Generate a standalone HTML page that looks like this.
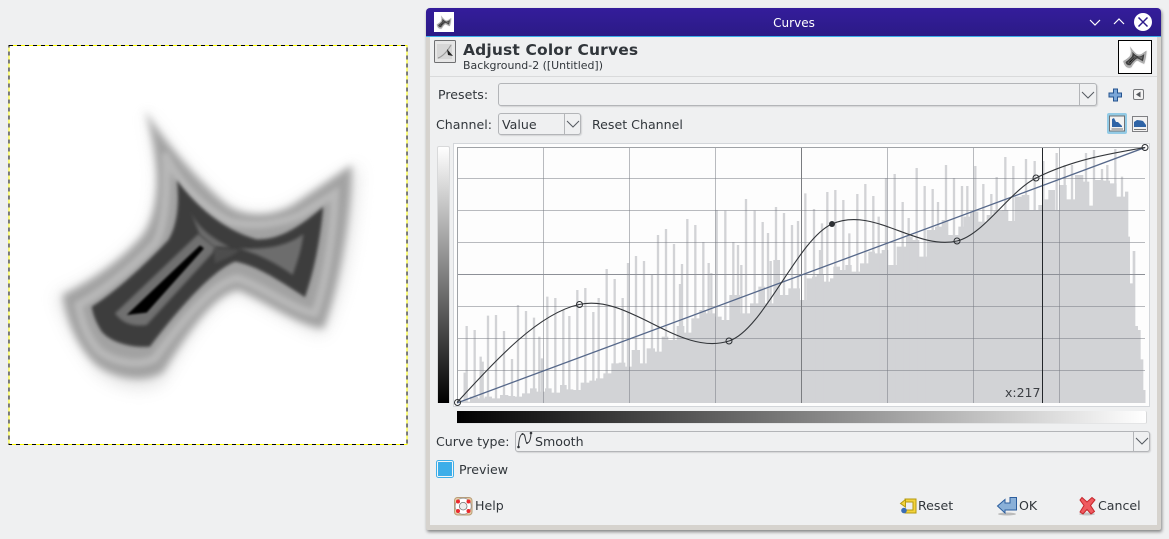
<!DOCTYPE html>
<html><head><meta charset="utf-8"><style>
html,body{margin:0;padding:0;width:1169px;height:539px;overflow:hidden;background:#eff0f1}
body{position:relative;font-family:"DejaVu Sans","Liberation Sans",sans-serif;font-size:13px;color:#31363b}
.a{position:absolute;box-sizing:border-box}
.t{position:absolute;white-space:nowrap;line-height:16px;height:16px}
.c{position:absolute;box-sizing:border-box;border:1px solid #b3b5b8;border-radius:3px;background:#eff0f1;box-shadow:1px 1px 1px #d3d4d6}
.d{position:absolute;top:0;bottom:0;border-left:1px solid #b3b5b8}
svg{position:absolute;left:0;top:0;overflow:visible}
</style></head><body>
<div class="a" style="left:9px;top:45px;width:398px;height:399px;background:#fff"></div>
<svg width="1169" height="539" viewBox="0 0 1169 539">
<defs>
<filter id="b0" x="-30%" y="-30%" width="160%" height="160%"><feGaussianBlur stdDeviation="24"/></filter>
<filter id="b1" x="-20%" y="-20%" width="140%" height="140%"><feGaussianBlur stdDeviation="12"/></filter>
<filter id="b2" x="-20%" y="-20%" width="140%" height="140%"><feGaussianBlur stdDeviation="8"/></filter>
<filter id="b3" x="-20%" y="-20%" width="140%" height="140%"><feGaussianBlur stdDeviation="4.500"/></filter>
<filter id="b5" x="-30%" y="-30%" width="160%" height="160%"><feGaussianBlur stdDeviation="3"/></filter>
<g id="shape">
<path filter="url(#b0)" fill="#c4c4c4" opacity=".45" d="M435 240C480 320 590 450 680 525C730 560 810 565 880 525L1075 405C1075 560 1035 800 970 915C900 900 800 825 715 790C650 800 580 890 490 1055C440 1090 350 1080 290 1025C240 960 190 880 168 795C270 755 360 695 425 620C465 570 475 480 470 420C465 350 450 290 435 240Z"/>
<path filter="url(#b1)" fill="#a2a2a2" d="M435 240C480 320 590 450 680 525C730 560 810 565 880 525L1055 405C1055 560 1015 780 970 895C900 890 800 815 715 780C650 790 580 880 490 1025C440 1060 350 1050 290 1005C240 960 200 880 188 795C270 755 360 695 425 620C465 570 475 480 470 420C465 350 450 290 435 240Z"/>
<path filter="url(#b2)" fill="none" stroke="#b8b8b8" stroke-width="24" stroke-linejoin="miter" d="M495 370C540 470 620 540 690 575C750 590 830 585 900 555L1005 490C1000 620 975 770 945 850C880 840 790 770 712 745C650 755 570 840 465 985C420 1010 350 1000 300 965C265 930 245 880 235 825C300 790 390 720 465 640C495 590 505 470 495 370Z"/>
<path filter="url(#b3)" fill="#3c3c3c" d="M530 450C590 530 670 600 770 628C840 630 900 590 970 530C960 640 940 730 915 802C850 760 770 705 705 695C640 720 540 830 450 950C390 955 330 935 305 905C290 880 280 860 275 830C340 790 430 710 505 630C530 590 540 520 530 450Z"/>
<path filter="url(#b3)" fill="#6f6f6f" d="M345 850L595 612L650 655L440 885C410 890 370 885 345 850Z"/>
<path filter="url(#b3)" fill="#6d6d6d" d="M910 612C905 660 890 700 878 735C830 700 770 670 715 655C790 660 860 650 910 612Z"/>
<path filter="url(#b3)" fill="#6a6a6a" d="M570 540C590 590 630 620 690 652L640 650L600 615Z"/>
<path filter="url(#b3)" fill="#4e4e4e" d="M640 652L720 660L690 680L645 700Z"/>
<path filter="url(#b5)" fill="#000" d="M380 855L600 646L612 655L440 848Z"/>
</g>
</defs>
<g transform="translate(0,30) scale(.33333)"><use href="#shape"/></g>
<rect x="9" y="45.500" width="398" height="399" fill="none" stroke="#ffff00" stroke-width="1"/>
<rect x="9" y="45.500" width="398" height="399" fill="none" stroke="#000" stroke-width="1" stroke-dasharray="4 4"/>
</svg>

<!-- window -->
<div class="a" style="left:426px;top:8px;width:735px;height:522px;background:#d6d3ce;border-radius:4px 4px 2px 2px;box-shadow:1px 2px 3px rgba(0,0,0,.45)"></div>
<div class="a" style="left:426px;top:8px;width:735px;height:29px;border-radius:4px 4px 0 0;background:linear-gradient(#341d9b,#2b1a86);border-bottom:1px solid #3daee9"></div>
<div class="a" style="left:430px;top:37px;width:727px;height:488px;background:#eff0f1"></div>
<div class="a" style="left:430px;top:76px;width:727px;height:1px;background:#d9dadb"></div>
<div class="a" style="left:434px;top:12px;width:20px;height:20px;background:#fff"></div>
<svg width="1169" height="539" viewBox="0 0 1169 539">
<g transform="translate(433.600,11.200) scale(.0167)"><use href="#shape"/></g>
</svg>
<div class="t" style="left:601px;top:15px;width:386px;text-align:center;color:#fff;font-size:12px">Curves</div>
<svg width="1169" height="539" viewBox="0 0 1169 539">
<path d="M1090 20L1095 25L1100 20" fill="none" stroke="#fff" stroke-width="1.200"/>
<path d="M1114 24L1119 19L1124 24" fill="none" stroke="#fff" stroke-width="1.200"/>
<circle cx="1143" cy="22" r="9" fill="#fff"/>
<path d="M1138.500 17.500L1147.500 26.500M1147.500 17.500L1138.500 26.500" stroke="#2d1b8c" stroke-width="1.500"/>
<!-- header icon -->
<rect x="434.500" y="40.500" width="21" height="22" rx="1" fill="#e6e6e6" stroke="#6f7072" stroke-width="1"/>
<path d="M437 44H452V59H437Z" fill="#d6d6d6"/>
<path d="M438 58C444 56 448 50 451 45" fill="none" stroke="#999" stroke-width="1.200"/>
<path d="M447 49L453 56L448 55Z" fill="#222"/>
</svg>
<div class="t" style="left:463px;top:41px;font-weight:bold;font-size:15.500px;line-height:18px;height:18px;letter-spacing:.15px;color:#31363b">Adjust Color Curves</div>
<div class="t" style="left:463px;top:58px;font-size:10.950px">Background-2 ([Untitled])</div>
<div class="a" style="left:1118px;top:40px;width:34px;height:34px;background:#fff;border:1px solid #000"></div>
<svg width="1169" height="539" viewBox="0 0 1169 539">
<g transform="translate(1118.300,39.800) scale(.0267)"><use href="#shape"/></g>
</svg>

<div class="t" style="left:438px;top:87px;font-size:12.600px">Presets:</div>
<div class="c" style="left:498px;top:83px;width:599px;height:23px"><div class="d" style="left:580px"></div></div>
<div class="t" style="left:436px;top:117px;font-size:12.600px">Channel:</div>
<div class="c" style="left:498px;top:113px;width:83px;height:22px"><div class="d" style="left:65px"></div></div>
<div class="t" style="left:502px;top:117px;font-size:12.600px">Value</div>
<div class="t" style="left:592px;top:117px;font-size:12.600px">Reset Channel</div>

<svg width="1169" height="539" viewBox="0 0 1169 539">
<path d="M1082 92L1088 98L1094 92" fill="none" stroke="#555a60" stroke-width="1"/>
<path d="M567 121L573 127L579 121" fill="none" stroke="#555a60" stroke-width="1"/>
<!-- plus -->
<path d="M1113.500 89H1117.500V93H1121.500V97H1117.500V101H1113.500V97H1109V93H1113.500Z" fill="#7aa6d8" stroke="#24538f" stroke-width="1"/>
<!-- small menu -->
<rect x="1133.500" y="89.500" width="10" height="10" rx="1.500" fill="#f4f4f4" stroke="#77797c"/>
<path d="M1140.500 91.500V97.500L1136 94.500Z" fill="#55585c"/>
<!-- histogram toggles -->
<rect x="1107" y="113" width="20" height="21" rx="2" fill="#93cbe6"/>
<rect x="1109.500" y="116" width="15" height="15" fill="#f2f2f2" stroke="#6f7073"/>
<path d="M1112 127V119L1114 118L1116 122L1118 122L1122 126V127Z" fill="#2f64a6"/>
<path d="M1111.500 129H1123" stroke="#777" stroke-width="1"/>
<rect x="1132.500" y="116.500" width="15" height="15" fill="#f2f2f2" stroke="#7f8083"/>
<path d="M1134 127V122L1137 120L1141 120.500L1143 121L1146 125V127Z" fill="#2f64a6"/>
<path d="M1134 129.500H1146" stroke="#777" stroke-width="1"/>
</svg>

<!-- left value bar -->
<div class="a" style="left:437px;top:146px;width:13px;height:257px;border-radius:2px 2px 0 0;background:linear-gradient(#fff,#000);border:1px solid #d8d9da;border-bottom:0"></div>
<!-- graph frame -->
<div class="a" style="left:453px;top:143px;width:697px;height:264px;background:#fdfdfd;border:1px solid #d3d6da"></div>
<svg width="1169" height="539" viewBox="0 0 1169 539">
<defs><clipPath id="cp"><rect x="457" y="148" width="688.500" height="255"/></clipPath></defs>
<g clip-path="url(#cp)">
<g transform="translate(450,140) scale(.33333)" fill="#d2d3d6" stroke="none">
<path d="M22 790V785H60V770H84V775H104V770H126V775H150V765H175V768H195V770H216V760H240V745H260V755H285V745H305V758H330V735H350V748H370V750H392V728H418V722H438V715H460V700H484V670H506V668H526V680H545V630H570V670H590V625H615V635H635V590H655V600H680V558H703V578H724V535H748V510H768V520H795V530H815V540H838V465H870V520H900V490H925V440H945V490H970V360H990V465H1015V445H1050V790Z"/>
<path fill="none" stroke="#d2d3d6" stroke-width="7" d="M44 790V698M50 790V558M74 790V570M92 790V650M98 790V665M114 790V527M138 790V525M162 790V573M186 790V657M204 790V495M228 790V513M252 790V533M268 790V590M276 790V655M292 790V470M316 790V474M340 790V510M358 790V528M382 790V450M406 790V444M430 790V516M446 790V474M470 790V387M494 790V417M518 790V474M534 790V369M558 790V348M582 790V363M606 790V404M624 790V285M648 790V267M672 790V312M690 790V432M696 790V372M712 790V237M736 790V255M760 790V306M776 790V369M784 790V399M800 790V210M826 790V212M850 790V306M864 790V315M874 790V375M888 790V177M914 790V212M938 790V246M954 790V279M962 790V363M978 790V201M1002 790V219M1026 790V255M1044 790V243"/>
</g>
<g transform="translate(800,140) scale(.33333)" fill="#d2d3d6" stroke="none">
<path d="M0 790V480H20V415H36V410H50V405H72V425H90V415H100V380H120V390H136V375H155V395H180V370H205V335H225V340H245V330H265V375H290V320H318V290H338V300H358V350H380V270H405V260H425V240H445V285H475V260H490V230H510V215H535V245H560V225H580V212H605V210H625V243H645V170H665V165H688V210H715V195H728V178H745V150H765V210H778V135H800V178H825V105H850V125H868V197H880V120H910V122H930V130H950V170H975V155H985V290H990V430H998V333H1006V558H1014V570H1022V658H1030V750H1038V790Z"/>
<path fill="none" stroke="#d2d3d6" stroke-width="7" d="M16 790V160M42 790V207M60 790V330M66 790V250M82 790V156M106 790V150M130 790V180M148 790V280M172 790V162M196 790V132M220 790V168M236 790V230M258 790V114M284 790V102M308 790V186M326 790V234M350 790V84M374 790V138M398 790V147M414 790V186M438 790V75M462 790V114M486 790V138M502 790V138M526 790V78M550 790V132M574 790V162M590 790V111M616 790V51M640 790V78M678 790V57M704 790V63M730 790V63M770 790V39M794 790V75M816 790V75M858 790V39M882 790V30M906 790V87M922 790V75M946 790V27M966 790V110"/>
</g>
<g fill="none" stroke="#73777f" stroke-opacity=".5" stroke-width="1">
<path d="M543.500 148V403M629.500 148V403M715.500 148V403M887.500 148V403M973.500 148V403M1059.500 148V403"/>
<path d="M457 178.500H1145M457 210.500H1145M457 242.500H1145M457 306.500H1145M457 338.500H1145M457 370.500H1145"/>
</g>
<path d="M801.500 148V403" stroke="#7a7c80" stroke-width="1"/>
<path d="M457 274.500H1145" stroke="#8d9097" stroke-width="1"/>
</g>
<path d="M457.500 403V147.500H1145.500" fill="none" stroke="#9fa2a6" stroke-width="1"/>
<path d="M457 403L1145 147.500" stroke="#56688a" stroke-width="1.300" fill="none"/>
<path d="M1042.500 148V403" stroke="#23262a" stroke-width="1"/>
<path d="M457 402.500C497.700 358.100 538.300 313.700 579 304.500C629 293.200 679 356.900 729 341C763.300 330.100 797.700 239.100 832 224C873.700 205.700 915.300 250.400 957 241C983.300 235.100 1009.700 191.100 1036 178C1072.300 159.900 1108.700 153.700 1145 147.500" fill="none" stroke="#33363a" stroke-width="1.100"/>
<g fill="none" stroke="#2c2f33" stroke-width="1">
<circle cx="457.500" cy="402.500" r="3"/><circle cx="579.500" cy="304.500" r="3"/><circle cx="729" cy="341" r="3"/><circle cx="957" cy="241" r="3"/><circle cx="1036" cy="178" r="3"/><circle cx="1145" cy="147.500" r="3"/>
</g>
<circle cx="832" cy="224" r="3" fill="#2c2f33"/>
</svg>
<div class="t" style="left:1005px;top:385px;font-size:12.500px;color:#3c3f44">x:217</div>
<!-- bottom gradient bar -->
<div class="a" style="left:457px;top:411px;width:690px;height:13px;border-radius:0 2px 2px 0;background:linear-gradient(90deg,#000,#fff);border-right:1px solid #d8d9da;border-bottom:1px solid #e4e5e6"></div>

<div class="t" style="left:436px;top:434px;font-size:12.600px">Curve type:</div>
<div class="c" style="left:515px;top:431px;width:635px;height:21px"><div class="d" style="left:617px"></div></div>
<div class="t" style="left:535px;top:434px;font-size:12.600px">Smooth</div>
<svg width="1169" height="539" viewBox="0 0 1169 539">
<path d="M1136 438L1142 444L1148 438" fill="none" stroke="#555a60" stroke-width="1"/>
<path d="M518.500 447C519 437 521 434 523 434C526 434 525 443 527 443C530 443 531 437 531 433" fill="none" stroke="#33363a" stroke-width="1"/>
<circle cx="518.500" cy="447" r="1.300" fill="#33363a"/><circle cx="522.500" cy="434" r="1" fill="#33363a"/><circle cx="527" cy="443" r="1" fill="#33363a"/><circle cx="531" cy="433" r="1.300" fill="#33363a"/>
<rect x="436.500" y="460.500" width="17" height="17" rx="2" fill="#f4f5f6" stroke="#3daee9"/>
<rect x="438" y="462" width="14" height="14" fill="#3daee9"/>
</svg>
<div class="t" style="left:459px;top:462px;font-size:12.600px">Preview</div>

<svg width="1169" height="539" viewBox="0 0 1169 539">
<!-- help -->
<rect x="454.500" y="497.500" width="17.500" height="17.500" rx="3" fill="#e4cfa8" stroke="#b89d78"/>
<circle cx="463.200" cy="506.200" r="8" fill="#fff" stroke="#9c9c9c" stroke-width=".8"/>
<circle cx="463.200" cy="506.200" r="3.800" fill="#eee" stroke="#777" stroke-width=".8"/>
<circle cx="458" cy="501.500" r="2" fill="#ec2a2e"/><circle cx="468.500" cy="501.500" r="2" fill="#ec2a2e"/><circle cx="458" cy="511" r="2" fill="#ec2a2e"/><circle cx="468.500" cy="511" r="2" fill="#ec2a2e"/>
<!-- reset -->
<path d="M905 499H916V513H905V510H913V502H905Z" fill="#f3d33c" stroke="#b49a10" stroke-width="1"/>
<path d="M900.500 503.500L905.500 499.500V507Z" fill="#f3d33c" stroke="#b49a10" stroke-width="1"/>
<circle cx="904" cy="510.500" r="2.800" fill="#3a6db5"/>
<!-- ok -->
<ellipse cx="1007" cy="514" rx="9" ry="1.500" fill="#bbb"/>
<path d="M997.500 506L1005 499.500V503H1010V497.500H1016.500V510H1005V513Z" fill="#8ab0d8" stroke="#2c5e9e" stroke-width="1"/>
<!-- cancel -->
<ellipse cx="1087" cy="514" rx="8" ry="1.500" fill="#c4c4c4"/>
<path d="M1082 497.500L1087 502L1092 497.500L1095 500L1090.500 505.500L1094.500 511.500L1091 514L1087 509.500L1083 514L1080 512L1084 505.500L1080 500Z" fill="#ef5a5f" stroke="#c5252b" stroke-width="1"/>
</svg>
<div class="t" style="left:475px;top:498px;font-size:12.600px">Help</div>
<div class="t" style="left:918px;top:498px;font-size:12.600px">Reset</div>
<div class="t" style="left:1019px;top:498px;font-size:12.600px">OK</div>
<div class="t" style="left:1098px;top:498px;font-size:12.600px">Cancel</div>
</body></html>
